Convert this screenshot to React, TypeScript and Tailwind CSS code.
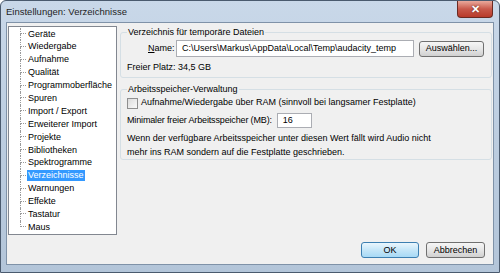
const ITEMS = [
  "Geräte",
  "Wiedergabe",
  "Aufnahme",
  "Qualität",
  "Programmoberfläche",
  "Spuren",
  "Import / Export",
  "Erweiterer Import",
  "Projekte",
  "Bibliotheken",
  "Spektrogramme",
  "Verzeichnisse",
  "Warnungen",
  "Effekte",
  "Tastatur",
  "Maus",
];
const SELECTED = "Verzeichnisse";

export default function App() {
  return (
    <div className="h-[273px] w-[500px] overflow-hidden bg-white">
      <div
        className="flex h-[273px] w-[500px] flex-col rounded-t-[6px] border border-[#4a5a6e] bg-gradient-to-b from-[#c9d8e9] via-[#bccde0] to-[#b3c5d9] text-[9px] text-black"
        style={{ fontFamily: '"Liberation Sans", Arial, sans-serif' }}
      >
        <TitleBar />
        <div className="mx-[5px] flex h-[243px] flex-col border border-[#7f92a8] bg-[#f0f0f0]">
          <div className="flex">
            <Tree />
            <div className="ml-[3px] flex w-[372px] flex-col pt-[3px]">
              <TempGroup />
              <MemoryGroup />
            </div>
          </div>
          <div className="mt-auto mb-[6px] flex justify-end gap-[7px] pr-[8px]">
            <Btn focused w="w-[58px]">
              OK
            </Btn>
            <Btn w="w-[59px]">Abbrechen</Btn>
          </div>
        </div>
      </div>
    </div>
  );
}

function TitleBar() {
  return (
    <div className="flex h-[21px] items-start justify-between">
      <span className="mt-[5px] ml-[5px] text-[9.5px] leading-[12px] text-[#1e1e1e]">
        Einstellungen: Verzeichnisse
      </span>
      <button
        type="button"
        className="mr-[6px] flex h-[17px] w-[36px] items-center justify-center rounded-b-[4px] border border-t-0 border-[#6b2a22] bg-gradient-to-b from-[#e9a99c] via-[#c8594b] to-[#b83a2a] text-[11px] font-bold leading-none text-white"
        style={{ textShadow: "0 0 2px #5a1a10" }}
      >
        ✕
      </button>
    </div>
  );
}

function Tree() {
  return (
    <div className="mt-[3px] ml-[1px] h-[209px] w-[109px] border border-[#828790] bg-white pt-[0.5px] pl-[11px]">
      {ITEMS.map((item, i) => {
        const last = i === ITEMS.length - 1;
        const sel = item === SELECTED;
        return (
          <div key={item} className="flex h-[12.9px]">
            <div className="flex w-[6px] flex-col">
              <div className="h-1/2 border-b border-l border-dotted border-[#9a9a9a]" />
              <div
                className={
                  last
                    ? "h-1/2"
                    : "h-1/2 border-l border-dotted border-[#9a9a9a]"
                }
              />
            </div>
            <span
              className={
                sel
                  ? "my-[1px] ml-[1px] bg-[#3399ff] px-[1px] leading-[11px] text-white"
                  : "ml-[1px] px-[1px] leading-[12.9px]"
              }
            >
              {item}
            </span>
          </div>
        );
      })}
    </div>
  );
}

function TempGroup() {
  return (
    <fieldset className="rounded-[3px] border border-[#d5dfe5] px-[6px] pb-[4px]">
      <legend className="px-[1px] leading-[12px]">
        Verzeichnis für temporäre Dateien
      </legend>
      <div className="mt-[2px] flex h-[17px] items-center">
        <span className="ml-[21px] w-[28px]">
          <span className="underline">N</span>ame:
        </span>
        <div className="flex h-[17px] w-[238px] items-center border border-[#abadb3] bg-white pl-[5px]">
          C:\Users\Markus\AppData\Local\Temp\audacity_temp
        </div>
        <Btn w="w-[65px]" className="ml-[5px]">
          Auswählen...
        </Btn>
      </div>
      <div className="mt-[4px] h-[12px] leading-[12px]">Freier Platz: 34,5 GB</div>
    </fieldset>
  );
}

function MemoryGroup() {
  return (
    <fieldset className="mt-[5px] rounded-[3px] border border-[#d5dfe5] px-[6px]">
      <legend className="px-[1px] leading-[12px]">Arbeitsspeicher-Verwaltung</legend>
      <div className="mt-[2px] flex h-[12px] items-center">
        <div className="h-[11px] w-[11px] border border-[#8f8f8f] bg-gradient-to-br from-[#dcdcdc] to-[#fafafa]" />
        <span className="ml-[3px]">
          Aufnahme/Wiedergabe über RAM (sinnvoll bei langsamer Festplatte)
        </span>
      </div>
      <div className="mt-[4px] flex h-[15px] items-center">
        <span className="whitespace-nowrap tracking-[-0.15px]">
          Minimaler freier Arbeitsspeicher (MB):
        </span>
        <div className="ml-[5px] flex h-[15px] w-[35px] items-center border border-[#abadb3] bg-white pl-[5px]">
          16
        </div>
      </div>
      <p className="mt-[4px] leading-[13.5px]">
        Wenn der verfügbare Arbeitsspeicher unter diesen Wert fällt wird Audio
        nicht
        <br />
        mehr ins RAM sondern auf die Festplatte geschrieben.
      </p>
    </fieldset>
  );
}

function Btn({
  children,
  focused,
  w,
  className = "",
}: {
  children: React.ReactNode;
  focused?: boolean;
  w: string;
  className?: string;
}) {
  return (
    <button
      type="button"
      className={
        (focused
          ? "border-[#3c7fb1] bg-gradient-to-b from-[#eaf6fd] via-[#c5e6f8] to-[#a7d9f5] "
          : "border-[#707070] bg-gradient-to-b from-[#f6f6f6] via-[#e6e6e6] to-[#d0d0d0] ") +
        "flex h-[16px] items-center justify-center rounded-[3px] border leading-none " +
        w +
        " " +
        className
      }
    >
      {children}
    </button>
  );
}
